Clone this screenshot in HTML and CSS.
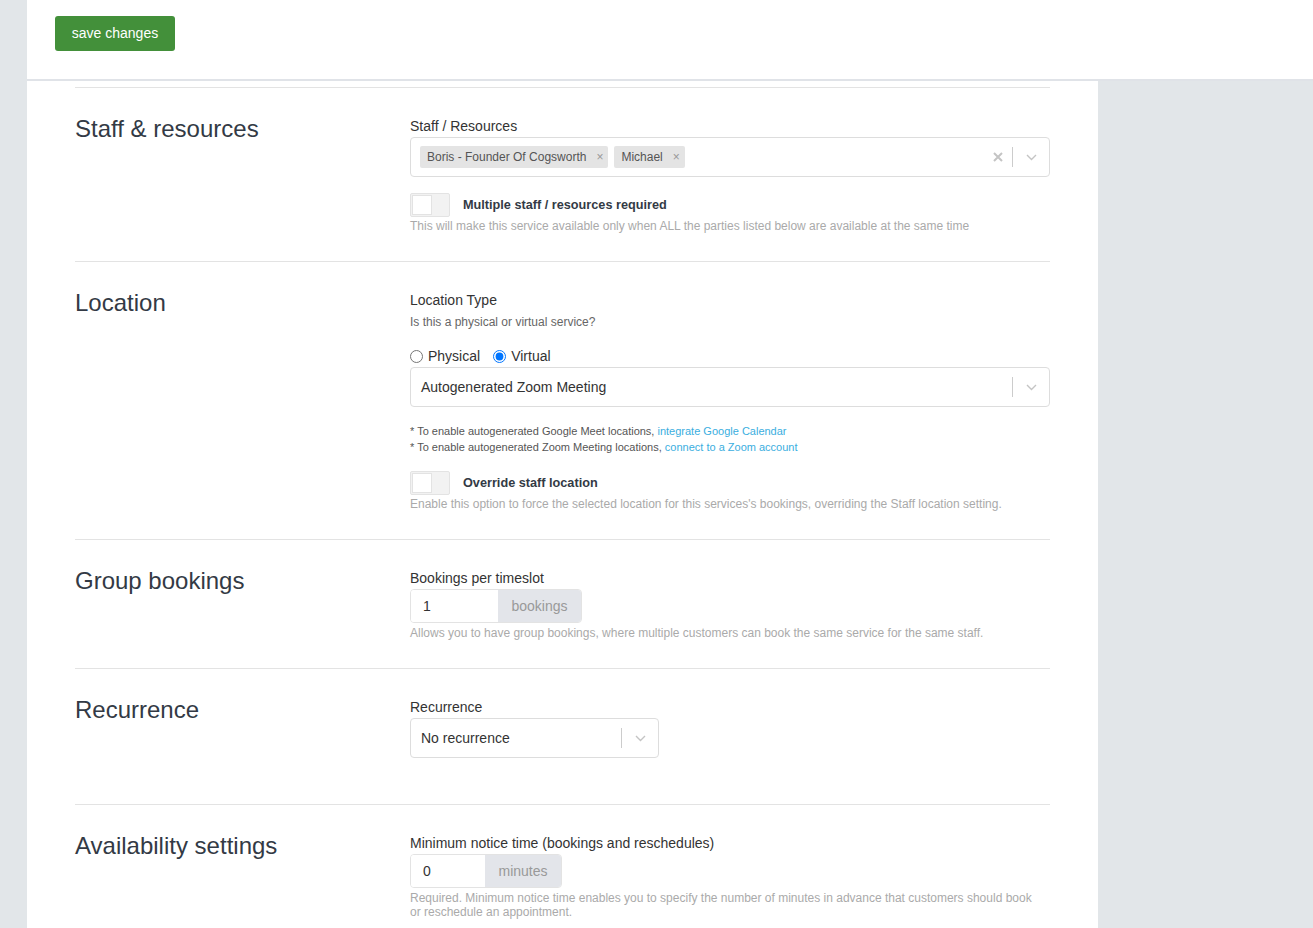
FILE: index.html
```html
<!DOCTYPE html>
<html>
<head>
<meta charset="utf-8">
<link rel="stylesheet" href="styles.css">
</head>
<body>
<div class="shell">
  <div class="strip"></div>
  <div class="main">
    <header class="topbar">
      <button class="btn-save">save changes</button>
    </header>
    <div class="below">
      <div class="panel">

        <section class="section">
          <h2 class="title">Staff &amp; resources</h2>
          <div class="fields">
            <div class="label">Staff / Resources</div>
            <div class="select multi">
              <div class="value tags">
                <span class="tag">Boris - Founder Of Cogsworth<span class="tag-x">×</span></span>
                <span class="tag">Michael<span class="tag-x">×</span></span>
              </div>
              <div class="indicators">
                <span class="clear"><svg width="10" height="10" viewBox="0 0 10 10"><path d="M1 1L9 9M9 1L1 9" stroke="#c4c4c4" stroke-width="2"/></svg></span>
                <span class="sep"></span>
                <span class="chev"><svg width="11" height="7" viewBox="0 0 11 7"><path d="M1 1l4.5 4.5L10 1" fill="none" stroke="#c4c4c4" stroke-width="1.4"/></svg></span>
              </div>
            </div>
            <div class="toggle-row">
              <span class="toggle"><span class="knob"></span></span>
              <span class="toggle-label">Multiple staff / resources required</span>
            </div>
            <div class="help">This will make this service available only when ALL the parties listed below are available at the same time</div>
          </div>
        </section>

        <section class="section">
          <h2 class="title">Location</h2>
          <div class="fields">
            <div class="label">Location Type</div>
            <div class="sub">Is this a physical or virtual service?</div>
            <div class="radios">
              <label class="radio"><input type="radio" name="loc">Physical</label>
              <label class="radio"><input type="radio" name="loc" checked>Virtual</label>
            </div>
            <div class="select">
              <div class="value">Autogenerated Zoom Meeting</div>
              <div class="indicators">
                <span class="sep"></span>
                <span class="chev"><svg width="11" height="7" viewBox="0 0 11 7"><path d="M1 1l4.5 4.5L10 1" fill="none" stroke="#c4c4c4" stroke-width="1.4"/></svg></span>
              </div>
            </div>
            <div class="notes">
              <div>* To enable autogenerated Google Meet locations, <a class="link">integrate Google Calendar</a></div>
              <div>* To enable autogenerated Zoom Meeting locations, <a class="link">connect to a Zoom account</a></div>
            </div>
            <div class="toggle-row">
              <span class="toggle"><span class="knob"></span></span>
              <span class="toggle-label">Override staff location</span>
            </div>
            <div class="help">Enable this option to force the selected location for this services's bookings, overriding the Staff location setting.</div>
          </div>
        </section>

        <section class="section">
          <h2 class="title">Group bookings</h2>
          <div class="fields">
            <div class="label">Bookings per timeslot</div>
            <div class="addon-input">
              <span class="num w87">1</span>
              <span class="addon w83">bookings</span>
            </div>
            <div class="help">Allows you to have group bookings, where multiple customers can book the same service for the same staff.</div>
          </div>
        </section>

        <section class="section tall">
          <h2 class="title">Recurrence</h2>
          <div class="fields">
            <div class="label">Recurrence</div>
            <div class="select short">
              <div class="value">No recurrence</div>
              <div class="indicators">
                <span class="sep"></span>
                <span class="chev"><svg width="11" height="7" viewBox="0 0 11 7"><path d="M1 1l4.5 4.5L10 1" fill="none" stroke="#c4c4c4" stroke-width="1.4"/></svg></span>
              </div>
            </div>
          </div>
        </section>

        <section class="section">
          <h2 class="title">Availability settings</h2>
          <div class="fields">
            <div class="label">Minimum notice time (bookings and reschedules)</div>
            <div class="addon-input">
              <span class="num w74">0</span>
              <span class="addon w76">minutes</span>
            </div>
            <div class="help tight">Required. Minimum notice time enables you to specify the number of minutes in advance that customers should book or reschedule an appointment.</div>
          </div>
        </section>

      </div>
    </div>
  </div>
</div>
</body>
</html>
```

FILE: styles.css
```css
* { box-sizing: border-box; }
html, body { margin: 0; padding: 0; }
body {
  background: #e2e6e9;
  font-family: "Liberation Sans", Arial, sans-serif;
  color: #333;
  overflow: hidden;
}
.shell { display: flex; min-height: 928px; }
.strip { width: 27px; flex: none; background: #e2e6e9; }
.main { flex: 1; display: flex; flex-direction: column; }
.topbar {
  background: #fff;
  height: 81px;
  border-bottom: 2px solid #e0e3e8;
  padding: 16px 0 0 28px;
}
.btn-save {
  width: 120px;
  height: 35px;
  background: #43903a;
  color: #fff;
  border: none;
  border-radius: 3px;
  font-family: "Liberation Sans", Arial, sans-serif;
  font-size: 14px;
  padding: 0 0 2px 0;
}
.below { display: flex; }
.panel {
  width: 1071px;
  background: #fff;
  padding: 6px 48px 0 48px;
}
.section {
  border-top: 1px solid #e3e3e3;
  display: grid;
  grid-template-columns: 335px 640px;
  padding: 28px 0 28px 0;
}
.section.tall { padding-bottom: 46px; }
.title {
  margin: 1px 0 0 0;
  font-size: 24px;
  line-height: 24px;
  font-weight: normal;
  color: #333a45;
}
.fields { display: flex; flex-direction: column; align-items: flex-start; }
.label { font-size: 14px; line-height: 20px; color: #333; margin-bottom: 1px; }
.sub { font-size: 12px; line-height: 16px; color: #666; margin-top: 3px; }
.select {
  width: 640px;
  height: 40px;
  border: 1px solid #ddd;
  border-radius: 4px;
  display: flex;
  align-items: center;
  background: #fff;
}
.select.short { width: 249px; }
.select .value {
  flex: 1;
  padding-left: 10px;
  font-size: 14px;
  color: #333;
}
.tags { display: flex; gap: 6px; padding-left: 9px !important; }
.tag {
  background: #e4e4e4;
  height: 22px;
  line-height: 22px;
  font-size: 12px;
  color: #555;
  padding: 0 5px 0 7px;
  border-radius: 2px;
  display: inline-flex;
}
.tag-x { color: #999; margin-left: 10px; font-size: 12px; }
.indicators { display: flex; align-items: center; height: 100%; }
.clear { width: 29px; display: flex; justify-content: center; align-items: center; }
.sep { width: 1px; height: 20px; background: #ccc; }
.chev { width: 36px; display: flex; justify-content: center; align-items: center; }
.toggle-row { display: flex; align-items: center; margin-top: 16px; }
.toggle {
  width: 40px;
  height: 24px;
  background: #f2f2f2;
  border: 1px solid #e3e3e3;
  border-radius: 2px;
  padding: 1px;
  display: flex;
}
.knob {
  width: 20px;
  height: 20px;
  background: #fff;
  border: 1px solid #e3e3e3;
}
.toggle-label { font-size: 12.7px; font-weight: bold; color: #333a45; margin-left: 13px; margin-top: -1px; }
.help { font-size: 12px; line-height: 14px; color: #aaa; margin-top: 2px; }
.help.tight { line-height: 14px; margin-top: 3px; width: 630px; }
.radios { display: flex; height: 20px; align-items: center; margin-top: 16px; }
.radio { display: inline-flex; align-items: center; font-size: 14px; color: #333; margin-right: 13px; }
.radio input { margin: 0 5px 0 0; width: 13px; height: 13px; }
.radios + .select { margin-top: 1px; }
.notes { font-size: 11px; line-height: 16px; color: #555; margin-top: 16px; }
.link { color: #3aaee0; text-decoration: none; }
.addon-input {
  display: flex;
  height: 34px;
  border: 1px solid #e3e3e3;
  border-radius: 4px;
  overflow: hidden;
}
.num { background: #fff; font-size: 14px; line-height: 32px; padding-left: 12px; color: #333; }
.addon { background: #e3e5ea; font-size: 14px; line-height: 32px; color: #999; text-align: center; }
.w87 { width: 87px; }
.w83 { width: 83px; }
.w74 { width: 74px; }
.w76 { width: 76px; }
.addon-input + .help { margin-top: 3px; }
```
